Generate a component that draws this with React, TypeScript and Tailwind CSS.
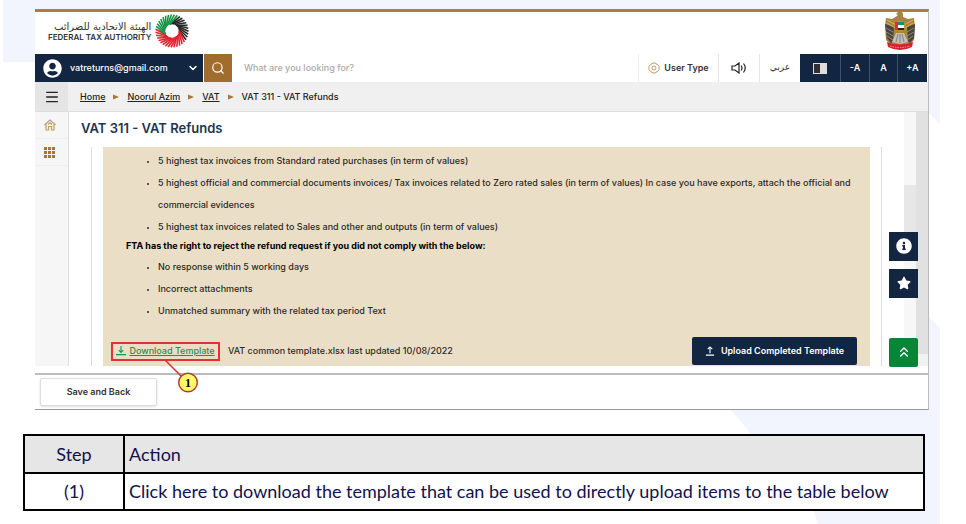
import React from "react";
import { FaUserCircle, FaStar, FaInfoCircle } from "react-icons/fa";
import { ChevronDown, ChevronsUp, Menu, Search } from "lucide-react";

const crumbs = ["Home", "Noorul Azim", "VAT"];

const invoiceRules = [
    "5 highest tax invoices from Standard rated purchases (in term of values)",
    "5 highest official and commercial documents invoices/ Tax invoices related to Zero rated sales (in term of values) In case you have exports, attach the official and commercial evidences",
    "5 highest tax invoices related to Sales and other and outputs (in term of values)",
];

const rejectRules = [
    "No response within 5 working days",
    "Incorrect attachments",
    "Unmatched summary with the related tax period Text",
];

const steps = [
    { step: "(1)", action: "Click here to download the template that can be used to directly upload items to the table below" },
];

function Backdrop() {
    return (
        <svg className="absolute inset-0 -z-10 h-full w-full" viewBox="0 0 966 524" preserveAspectRatio="none" aria-hidden="true">
            <path fill="#f2f4fe" d="M3 0H940V124L878 62H3Z" />
            <path fill="#f2f4fe" d="M928 316L940 328V524H818L813 508L731 410L780 330Z" />
        </svg>
    );
}

// seven blades of slanted strokes: two black, three red, two green
const bladeColors = ["#262626", "#262626", "#e3222e", "#e3222e", "#e3222e", "#129447", "#129447"];

function RingLogo() {
    const rad = (deg: number) => (deg * Math.PI) / 180;
    const strokes = bladeColors.flatMap((color, blade) =>
        Array.from({ length: 5 }, (_, i) => {
            const start = -65 + (blade * 360) / 7;
            return { id: blade * 5 + i, color, a: start + 4 + i * 10.3, b: start - 42 + i * 13 };
        })
    );
    return (
        <svg className="size-[34px]" viewBox="-17 -17 34 34" aria-hidden="true">
            {strokes.map((s) => (
                <line
                    key={s.id}
                    x1={16.5 * Math.cos(rad(s.a))}
                    y1={16.5 * Math.sin(rad(s.a))}
                    x2={7 * Math.cos(rad(s.b))}
                    y2={7 * Math.sin(rad(s.b))}
                    stroke={s.color}
                    strokeWidth="1.6"
                />
            ))}
            <circle r="6" fill="#fff" />
        </svg>
    );
}

function Emblem() {
    return (
        <svg className="h-[38px] w-8" viewBox="0 0 32 38" aria-label="Emblem" role="img">
            <path fill="#a8843c" d="M14 3l-2-1 2-2h4l1 2v3l5 2 6-1 1 9-1 13-5 6H8l-6-6L1 14 2 6l6 1 5-3z" />
            <path fill="#48453f" d="M1 12l9 3-1 14-2 2-4-5zM31 12l-8 3 1 14 2 2 4-5z" />
            <path stroke="#aaa398" strokeWidth="0.7" fill="none" d="M2 16l7 4M2 20l7 4M3 24l6 4M30 16l-7 4M30 20l-7 4M29 24l-6 4" />
            <path stroke="#d8b45d" strokeWidth="1" fill="none" d="M3 8l9 5M3 11l8 5M29 8l-9 5M29 11l-8 5" />
            <path fill="#c4c0b8" d="M12 21h8l4 9-8 2-8-2z" />
            <path stroke="#77716a" strokeWidth="0.8" d="M14 22l-2 8M16 22v9M18 22l2 8" />
            <circle cx="16" cy="14" r="5.500" fill="#b99143" />
            <path fill="#15945a" d="M12 10h8v3h-8z" />
            <path fill="#fff" d="M12 13h8v3h-8z" />
            <path fill="#252525" d="M12 16h8v2h-8z" />
            <path fill="#db303b" d="M11 10h3v8h-3z" />
            <path fill="#d7202e" d="M3 30q13 5 26 0l-1 5q-12 6-24 0z" />
            <path stroke="#f3a1a4" strokeWidth="0.9" fill="none" strokeDasharray="1.5 1" d="M6 34q10 3 20 0" />
        </svg>
    );
}

function GearIcon() {
    return (
        <svg className="size-3" viewBox="0 0 24 24" fill="none" stroke="#b58a4c" strokeWidth="1.7" aria-hidden="true">
            <path d="M9 2h6l1 2 3 1 3 4v6l-3 4-3 1-1 2H9l-1-2-3-1-3-4V9l3-4 3-1z" />
            <circle cx="12" cy="12" r="4" />
        </svg>
    );
}

function SpeakerIcon() {
    return (
        <svg className="h-3 w-4" viewBox="0 0 16 12" fill="none" stroke="#222" strokeWidth="1.2" aria-hidden="true">
            <path d="M1 4h3l4-3v10L4 8H1zM10 3.500q2 2.500 0 5M12.500 1.500q3.500 4.500 0 9" />
        </svg>
    );
}

function TrayArrow({ up = false, className }: { up?: boolean; className: string }) {
    return (
        <svg className={className} viewBox="0 0 11 11" fill="none" stroke="currentColor" strokeWidth="1.2" aria-hidden="true">
            {up ? <path d="M5.500 8V1M3 3.500L5.500 1L8 3.500M1 10h9" /> : <path d="M5.500 0v7M3 4.500L5.500 7L8 4.500M0 9.500h11" />}
        </svg>
    );
}

function TopBar() {
    return (
        <div className="flex h-7 bg-white text-[9px] font-semibold">
            <button className="flex w-[168px] items-center bg-[#122641] pr-1 pl-2 text-white">
                <FaUserCircle className="size-[19px]" />
                <span className="ml-2 flex-1 text-left font-medium">vatreturns@gmail.com</span>
                <ChevronDown className="size-3" strokeWidth={3} />
            </button>
            <button className="ml-px flex w-7 items-center justify-center bg-[#a06d2d] text-white" aria-label="Search">
                <Search className="size-[14px]" />
            </button>
            <input
                className="min-w-0 flex-1 px-3 font-medium outline-none placeholder:text-[#aaa]"
                type="text"
                aria-label="Search text"
                placeholder="What are you looking for?"
            />
            <button className="flex w-20 items-center justify-center gap-1 border-l border-[#eee] text-[#333]">
                <GearIcon />
                User Type
            </button>
            <button className="flex w-[41px] items-center justify-center border-l border-[#e6e6e6]" aria-label="Listen">
                <SpeakerIcon />
            </button>
            <button className="w-[41px] border-l border-[#e6e6e6] font-['DejaVu_Sans'] font-normal text-[#333]" lang="ar">
                عربي
            </button>
            <div className="mr-px flex divide-x divide-[#40516a] bg-[#122641] text-white">
                <button className="flex w-[41px] items-center justify-center" aria-label="Contrast">
                    <span className="flex h-[11px] w-[14px] border border-[#ddd]">
                        <span className="w-1/2 bg-[#332f30]" />
                        <span className="w-1/2 bg-[#ddd]" />
                    </span>
                </button>
                <button className="w-[29px]">-A</button>
                <button className="w-7">A</button>
                <button className="w-[29px]">+A</button>
            </div>
        </div>
    );
}

function SideNav() {
    return (
        <nav className="w-[34px] shrink-0 border-r border-[#ddd] bg-[#f6f6f6] text-[#a77a3d]">
            <a href="#home" aria-label="Home" className="flex h-[26px] items-center justify-center pr-1">
                <svg className="size-3" viewBox="0 0 12 12" fill="none" stroke="#bd9d6c" strokeWidth="1.2">
                    <path d="M0.500 6L6 1L11.500 6M2 5.500V11H4.500V7.500H7.500V11H10V5.500M4 5.500L6 3.700L8 5.500" />
                </svg>
            </a>
            <a href="#apps" aria-label="Services" className="flex h-7 items-center justify-center border-y border-[#eee] pr-1">
                <span className="grid grid-cols-3 gap-px">
                    {Array.from({ length: 9 }, (_, i) => (
                        <span key={i} className="size-[3px] bg-[#a5753a]" />
                    ))}
                </span>
            </a>
        </nav>
    );
}

function RuleList({ items }: { items: string[] }) {
    return (
        <ul className="list-disc pl-8 leading-[22px] marker:text-[7px]">
            {items.map((item) => (
                <li key={item}>{item}</li>
            ))}
        </ul>
    );
}

function DownloadRow() {
    return (
        <div className="mt-[15px] flex items-center">
            <div className="relative">
                <a href="#template" className="flex h-[19px] w-[109px] items-center justify-center gap-[3px] border-2 border-[#e23334] text-[#179451]">
                    <TrayArrow className="size-[10px] shrink-0" />
                    <span className="underline whitespace-nowrap">Download Template</span>
                </a>
                <svg className="absolute top-[18px] left-[52px] size-9" viewBox="0 0 36 36" aria-hidden="true">
                    <path d="M2 0L20 18" stroke="#d42d32" strokeWidth="1.5" />
                    <circle cx="25" cy="22.500" r="9.300" fill="#ffff69" stroke="#b93a2c" strokeWidth="1.500" />
                    <text x="25" y="26.500" textAnchor="middle" fontFamily="Liberation Serif, serif" fontSize="12" fontWeight="700">
                        1
                    </text>
                </svg>
            </div>
            <span className="ml-2 flex-1">VAT common template.xlsx last updated 10/08/2022</span>
            <button className="mr-[13px] flex h-7 w-[165px] items-center justify-center gap-[6px] rounded-xs bg-[#122641] font-semibold whitespace-nowrap text-white">
                <TrayArrow up className="size-[10px]" />
                Upload Completed Template
            </button>
        </div>
    );
}

function Portal() {
    return (
        <section className="relative border-t-3 border-r border-b border-t-[#ab7b40] border-r-[#bbb] border-b-[#999] bg-white">
            <header className="flex h-[42px] items-start justify-between pr-3 pl-[13px]">
                <a href="#fta" className="flex items-center gap-1 pt-[2px] text-[#333]">
                    <span className="flex flex-col">
                        <span lang="ar" dir="rtl" className="font-['DejaVu_Sans'] text-[10px] leading-3">
                            الهيئة الاتحادية للضرائب
                        </span>
                        <span className="text-[8px] leading-2 font-semibold">FEDERAL TAX AUTHORITY</span>
                    </span>
                    <RingLogo />
                </a>
                <Emblem />
            </header>
            <TopBar />
            <div className="flex h-[30px] items-center border-b border-[#ddd] bg-[#f0f0f0] text-[9px] font-medium text-[#222]">
                <button className="flex h-full w-[33px] items-center justify-center bg-[#e5e5e5]" aria-label="Menu">
                    <Menu className="size-4" />
                </button>
                <nav className="ml-3 flex items-center gap-2">
                    {crumbs.map((crumb) => (
                        <React.Fragment key={crumb}>
                            <a href="#crumb" className="underline">{crumb}</a>
                            <svg className="size-[6px]" viewBox="0 0 6 6" aria-hidden="true">
                                <path fill="#a8763a" d="M0 0.500L6 3L0 5.500Z" />
                            </svg>
                        </React.Fragment>
                    ))}
                    <span>VAT 311 - VAT Refunds</span>
                </nav>
            </div>
            <div className="flex">
                <SideNav />
                <main className="min-w-0 flex-1">
                    <h1 className="pt-1.5 pb-[9px] pl-3 text-[13px] leading-5 font-semibold text-[#1d3553]">VAT 311 - VAT Refunds</h1>
                    <div className="mr-[22px] ml-[22px] border-x border-[#ddd] pr-[11px] pl-[11px]">
                        <div className="bg-[#eadfc6] pt-[3px] pb-px pl-2 text-[9px] font-medium text-[#2d2a26]">
                            <div className="pr-1 pl-[15px]">
                                <RuleList items={invoiceRules} />
                                <p className="pb-0.5 leading-4 font-bold text-black">
                                    FTA has the right to reject the refund request if you did not comply with the below:
                                </p>
                                <RuleList items={rejectRules} />
                            </div>
                            <DownloadRow />
                        </div>
                    </div>
                </main>
                <div className="w-3 bg-[#f7f7f7] pt-[73px]">
                    <div className="h-12 bg-[#e7e7e7]" />
                </div>
                <div className="w-3 bg-[#f2f2f2] pb-3">
                    <div className="h-full bg-[#e1e1e1]" />
                </div>
            </div>
            <footer className="mt-[7px] border-t-2 border-[#bbb] px-[5px] pt-0.5 pb-[3px]">
                <button className="h-7 w-[117px] rounded-xs border border-[#ddd] bg-white text-[9px] font-semibold text-[#333] shadow">
                    Save and Back
                </button>
            </footer>
            <div className="absolute right-2.5 bottom-[42px] flex flex-col text-white">
                <button className="mb-2 flex h-[29px] w-[29px] items-center justify-center bg-[#122641]" aria-label="Information">
                    <FaInfoCircle className="size-4" />
                </button>
                <button className="mb-10 flex h-[29px] w-[29px] items-center justify-center bg-[#122641]" aria-label="Favourites">
                    <FaStar className="size-[14px]" />
                </button>
                <button className="flex h-[29px] w-[29px] items-center justify-center rounded-xs bg-[#078638]" aria-label="Back to top">
                    <ChevronsUp className="size-4" />
                </button>
            </div>
        </section>
    );
}

function StepTable() {
    return (
        <table className="w-full border-collapse border-2 border-black bg-white font-['Lato'] text-[18px] leading-6 text-[#12124a]">
            <thead>
                <tr className="h-[38px] bg-[#e6e6e6]">
                    <th className="w-[100px] border-2 border-black font-normal">Step</th>
                    <th className="border-2 border-black px-1 text-left font-normal">Action</th>
                </tr>
            </thead>
            <tbody>
                {steps.map((row) => (
                    <tr key={row.step} className="h-[37px]">
                        <td className="border-2 border-black text-center">{row.step}</td>
                        <td className="border-2 border-black px-1">{row.action}</td>
                    </tr>
                ))}
            </tbody>
        </table>
    );
}

export default function App() {
    return (
        <div className="relative isolate min-h-screen bg-white pt-[9px] font-['Inter',sans-serif]">
            <Backdrop />
            <div className="mr-[37px] ml-[35px]">
                <Portal />
            </div>
            <div className="mt-6 mr-[41px] ml-[23px]">
                <StepTable />
            </div>
        </div>
    );
}
